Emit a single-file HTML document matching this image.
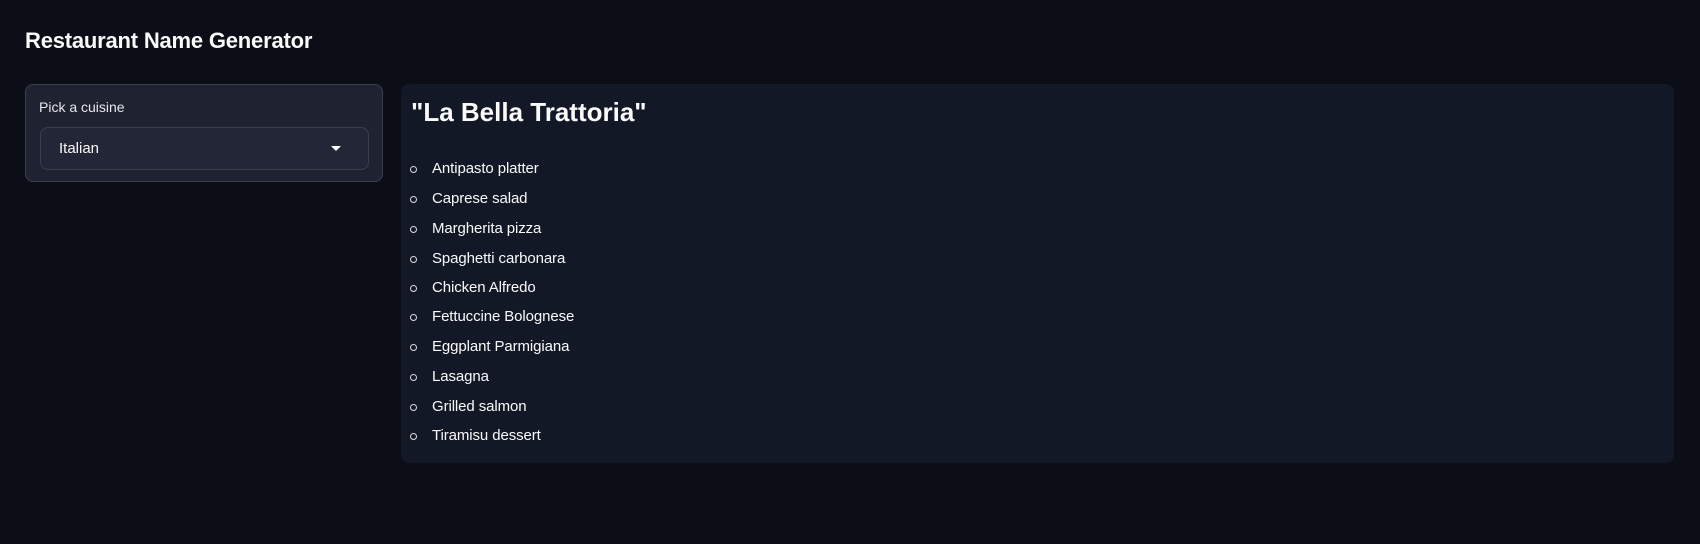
<!DOCTYPE html>
<html><head><style>
*{margin:0;padding:0;box-sizing:border-box}
body{width:1700px;height:544px;background:#0b0e17;font-family:"Liberation Sans",sans-serif;color:#fafafa;position:relative;overflow:hidden}
.t{position:absolute;left:25px;top:28px;font-size:22px;font-weight:bold;letter-spacing:-0.2px}
.lp{position:absolute;left:25px;top:84px;width:358px;height:98px;background:#1f2331;border:1px solid #3b3f4d;border-radius:8px}
.lbl{position:absolute;left:39px;top:99px;font-size:14px;color:#e6e6ea}
.dd{position:absolute;left:40px;top:127px;width:329px;height:43px;border:1px solid #3b3f4d;border-radius:8px;background:#222636}
.dd span{position:absolute;left:18px;top:12px;font-size:15px}
.ar{position:absolute;left:331px;top:146px;width:0;height:0;border-left:5px solid transparent;border-right:5px solid transparent;border-top:5px solid #fff}
.rp{position:absolute;left:401px;top:84px;width:1273px;height:379px;background:#131826;border-radius:8px}
h1{position:absolute;left:411px;top:97px;font-size:26px;font-weight:bold}
ul{position:absolute;left:0;top:159px;list-style:none}
li{position:absolute;left:432px;font-size:15px;white-space:nowrap;line-height:20px;letter-spacing:-0.1px}
li:before{content:"";position:absolute;left:-22px;top:7px;width:5px;height:5px;border:1.2px solid #ddd;border-radius:50%}
</style></head><body>
<div class="t">Restaurant Name Generator</div>
<div class="lp"></div>
<div class="lbl">Pick a cuisine</div>
<div class="dd"><span>Italian</span></div>
<div class="ar"></div>
<div class="rp"></div>
<h1>"La Bella Trattoria"</h1>
<ul>
<li style="top:0">Antipasto platter</li>
<li style="top:30px">Caprese salad</li>
<li style="top:60px">Margherita pizza</li>
<li style="top:90px">Spaghetti carbonara</li>
<li style="top:119px">Chicken Alfredo</li>
<li style="top:148px">Fettuccine Bolognese</li>
<li style="top:178px">Eggplant Parmigiana</li>
<li style="top:208px">Lasagna</li>
<li style="top:238px">Grilled salmon</li>
<li style="top:267px">Tiramisu dessert</li>
</ul>
</body></html>
